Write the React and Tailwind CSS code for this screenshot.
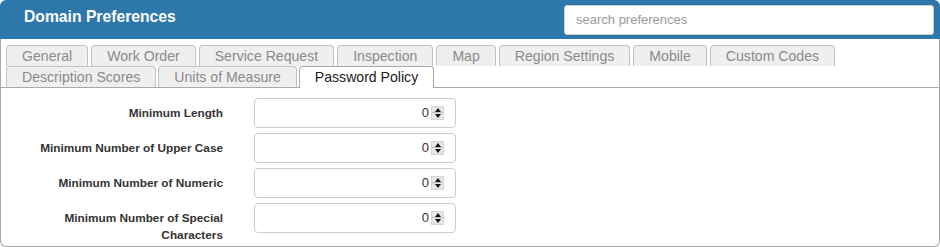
import React from "react";

const row1 = ["General", "Work Order", "Service Request", "Inspection", "Map", "Region Settings", "Mobile", "Custom Codes"];
const row2 = ["Description Scores", "Units of Measure"];

function Tab({ label, active }) {
  if (active) {
    return (
      <div className="relative z-10 -mb-px h-[22px] rounded-t-[4px] border border-b-0 border-[#aaaaaa] bg-white px-[15px] text-[14.1px] leading-[21px] text-[#222]">
        {label}
      </div>
    );
  }
  return (
    <div className="h-[21px] rounded-t-[4px] border border-b-0 border-[#c2c2c2] bg-[#efefef] px-[15px] text-[14.1px] leading-[21px] text-[#8a8a8a]">
      {label}
    </div>
  );
}

function Spinner() {
  return (
    <div className="flex h-[14px] w-[13px] flex-col border border-[#d4d4d4] bg-[#e6e6e6]">
      <div className="flex h-[6px] items-center justify-center border-b border-[#bdbdbd]">
        <div className="h-0 w-0 border-x-[3px] border-b-[4px] border-x-transparent border-b-[#111]" />
      </div>
      <div className="flex h-[6px] items-center justify-center">
        <div className="h-0 w-0 border-x-[3px] border-t-[4px] border-x-transparent border-t-[#111]" />
      </div>
    </div>
  );
}

function Row({ label }) {
  return (
    <div className="flex items-start">
      <div className="ml-[32px] w-[190px] pt-[7px] text-right text-[11.8px] font-bold leading-[17px] text-[#333]">
        {label}
      </div>
      <div className="ml-[31px] flex h-[30px] w-[202px] items-center justify-end rounded-[4px] border border-[#cccccc] bg-white pr-[11px]">
        <span className="mr-[2px] text-[13px] leading-[14px] text-[#333]">0</span>
        <Spinner />
      </div>
    </div>
  );
}

export default function App() {
  return (
    <div className="h-[247px] w-[940px] overflow-hidden bg-white" style={{ fontFamily: '"Liberation Sans", Arial, sans-serif' }}>
      <div className="flex h-[39px] items-start justify-between rounded-t-[6px] bg-[#2e77ab] pl-[24px] pr-[6px]">
        <div className="pt-[7px] text-[15.7px] font-bold leading-[20px] text-white">Domain Preferences</div>
        <div className="mt-[5px] flex h-[30px] w-[370px] items-center rounded-[3px] border border-[#cfcfcf] bg-white pl-[11px] text-[13px] text-[#9a9a9a]">
          search preferences
        </div>
      </div>
      <div className="h-[208px] rounded-b-[6px] border border-t-0 border-[#a9a9a9]">
        <div className="border-b border-[#aaaaaa] px-[5px] pt-[6px]">
          <div className="flex gap-[3px]">
            {row1.map((t) => (
              <Tab key={t} label={t} />
            ))}
          </div>
          <div className="flex gap-[2px]">
            {row2.map((t) => (
              <Tab key={t} label={t} />
            ))}
            <Tab label="Password Policy" active />
          </div>
        </div>
        <div className="flex flex-col gap-[5px] pt-[10px]">
          <Row label="Minimum Length" />
          <Row label="Minimum Number of Upper Case" />
          <Row label="Minimum Number of Numeric" />
          <Row label="Minimum Number of Special Characters" />
        </div>
      </div>
    </div>
  );
}
